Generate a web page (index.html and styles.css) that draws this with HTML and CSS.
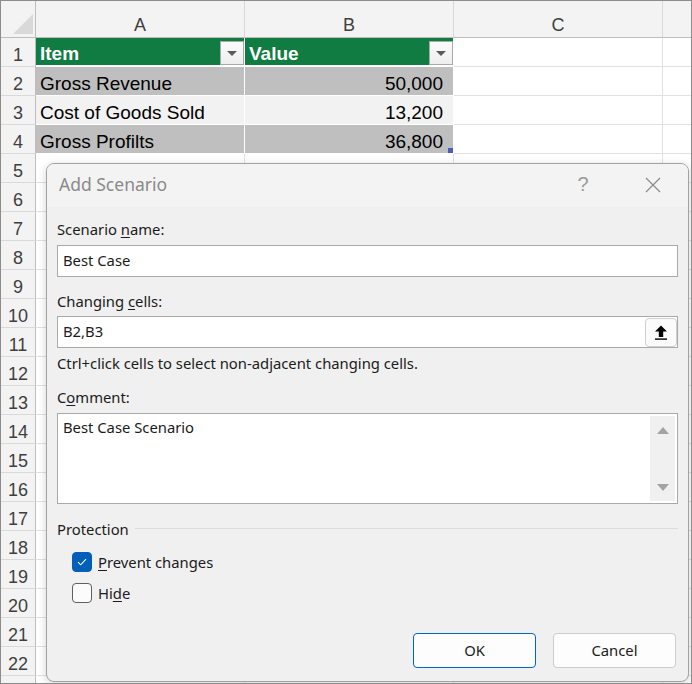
FILE: index.html
```html
<!DOCTYPE html>
<html lang="en">
<head>
<meta charset="utf-8">
<title>Add Scenario</title>
<link rel="stylesheet" href="styles.css">
</head>
<body>
<div class="app">
  <div class="sheet">
    <div class="corner"><span class="corner-tri"></span></div>
    <div class="colhead">A</div>
    <div class="colhead">B</div>
    <div class="colhead">C</div>
    <div class="colhead last"></div>

    <div class="rowhead">1</div>
    <div class="cell th"><span class="txt">Item</span><span class="filter"><span class="caret"></span></span></div>
    <div class="cell th"><span class="txt">Value</span><span class="filter"><span class="caret"></span></span></div>
    <div class="cell"></div><div class="cell last"></div>

    <div class="rowhead">2</div>
    <div class="cell band dark"><span class="txt">Gross Revenue</span></div>
    <div class="cell band dark num"><span class="txt">50,000</span></div>
    <div class="cell"></div><div class="cell last"></div>

    <div class="rowhead">3</div>
    <div class="cell band light"><span class="txt">Cost of Goods Sold</span></div>
    <div class="cell band light num"><span class="txt">13,200</span></div>
    <div class="cell"></div><div class="cell last"></div>

    <div class="rowhead">4</div>
    <div class="cell band dark"><span class="txt">Gross Profilts</span></div>
    <div class="cell band dark num sel"><span class="txt">36,800</span><span class="handle"></span></div>
    <div class="cell"></div><div class="cell last"></div>

    <div class="rowhead">5</div><div class="cell"></div><div class="cell"></div><div class="cell"></div><div class="cell last"></div>
    <div class="rowhead">6</div><div class="cell"></div><div class="cell"></div><div class="cell"></div><div class="cell last"></div>
    <div class="rowhead">7</div><div class="cell"></div><div class="cell"></div><div class="cell"></div><div class="cell last"></div>
    <div class="rowhead">8</div><div class="cell"></div><div class="cell"></div><div class="cell"></div><div class="cell last"></div>
    <div class="rowhead">9</div><div class="cell"></div><div class="cell"></div><div class="cell"></div><div class="cell last"></div>
    <div class="rowhead">10</div><div class="cell"></div><div class="cell"></div><div class="cell"></div><div class="cell last"></div>
    <div class="rowhead">11</div><div class="cell"></div><div class="cell"></div><div class="cell"></div><div class="cell last"></div>
    <div class="rowhead">12</div><div class="cell"></div><div class="cell"></div><div class="cell"></div><div class="cell last"></div>
    <div class="rowhead">13</div><div class="cell"></div><div class="cell"></div><div class="cell"></div><div class="cell last"></div>
    <div class="rowhead">14</div><div class="cell"></div><div class="cell"></div><div class="cell"></div><div class="cell last"></div>
    <div class="rowhead">15</div><div class="cell"></div><div class="cell"></div><div class="cell"></div><div class="cell last"></div>
    <div class="rowhead">16</div><div class="cell"></div><div class="cell"></div><div class="cell"></div><div class="cell last"></div>
    <div class="rowhead">17</div><div class="cell"></div><div class="cell"></div><div class="cell"></div><div class="cell last"></div>
    <div class="rowhead">18</div><div class="cell"></div><div class="cell"></div><div class="cell"></div><div class="cell last"></div>
    <div class="rowhead">19</div><div class="cell"></div><div class="cell"></div><div class="cell"></div><div class="cell last"></div>
    <div class="rowhead">20</div><div class="cell"></div><div class="cell"></div><div class="cell"></div><div class="cell last"></div>
    <div class="rowhead">21</div><div class="cell"></div><div class="cell"></div><div class="cell"></div><div class="cell last"></div>
    <div class="rowhead">22</div><div class="cell"></div><div class="cell"></div><div class="cell"></div><div class="cell last"></div>
    <div class="rowhead"></div><div class="cell"></div><div class="cell"></div><div class="cell"></div><div class="cell last"></div>
  </div>

  <div class="dialog">
    <div class="titlebar">
      <span class="title">Add Scenario</span>
      <span class="tb-btn help">?</span>
      <span class="tb-btn close">
        <svg width="16" height="16" viewBox="0 0 16 16"><path d="M1 1 L15 15 M15 1 L1 15" stroke="#8a8a8a" stroke-width="1.2" fill="none"/></svg>
      </span>
    </div>
    <div class="body">
      <div class="label l-first">Scenario <u>n</u>ame:</div>
      <div class="input">Best Case</div>

      <div class="label l-mid">Changing <u>c</u>ells:</div>
      <div class="input with-btn">
        <span class="val">B2,B3</span>
        <span class="ref-btn">
          <svg width="14" height="15" viewBox="0 0 14 15"><polygon points="7,0.5 1,6.5 4.8,6.5 4.8,12 9.2,12 9.2,6.5 13,6.5" fill="#000"/><rect x="1" y="13.4" width="12" height="1.4" fill="#000"/></svg>
        </span>
      </div>
      <div class="hint">Ctrl+click cells to select non-adjacent changing cells.</div>

      <div class="label l-comment">C<u>o</u>mment:</div>
      <div class="textarea">
        <div class="ta-text">Best Case Scenario</div>
        <div class="scrollbar">
          <span class="arr up"></span>
          <span class="arr down"></span>
        </div>
      </div>

      <div class="group">
        <span class="group-label">Protection</span>
        <span class="group-line"></span>
      </div>

      <div class="check first">
        <span class="box checked">
          <svg width="10" height="8" viewBox="0 0 10 8"><path d="M1 4.2 L3.7 6.8 L9 1.2" stroke="#fff" stroke-width="1.1" fill="none"/></svg>
        </span>
        <span class="check-label"><u>P</u>revent changes</span>
      </div>
      <div class="check second">
        <span class="box"></span>
        <span class="check-label">Hi<u>d</u>e</span>
      </div>

      <div class="buttons">
        <span class="btn default">OK</span>
        <span class="btn">Cancel</span>
      </div>
    </div>
  </div>
</div>
</body>
</html>
```

FILE: styles.css
```css
* { box-sizing: border-box; }

html, body {
  margin: 0;
  padding: 0;
  background: #ffffff;
}

.app {
  position: relative;
  width: 692px;
  height: 684px;
  border: 1px solid #8c8c8c;
  overflow: hidden;
  background: #ffffff;
}

/* ---------- Spreadsheet ---------- */
.sheet {
  display: grid;
  grid-template-columns: 35px 209px 209px 209px 1fr;
  grid-template-rows: 37px repeat(23, 29px);
  font-family: "Liberation Sans", Arial, sans-serif;
  font-size: 19px;
  line-height: 20px;
  color: #000;
}

.corner {
  background: #f3f3f3;
  border-right: 1px solid #bdbdbd;
  border-bottom: 1px solid #bdbdbd;
  display: flex;
  align-items: flex-end;
  justify-content: flex-end;
  padding: 0 2px 3px 0;
}

.corner-tri {
  width: 20px;
  height: 20px;
  background: #d9d9d9;
  clip-path: polygon(100% 0, 100% 100%, 0 100%);
}

.colhead {
  background: #f3f3f3;
  border-right: 1px solid #d8d8d8;
  border-bottom: 1px solid #bdbdbd;
  display: flex;
  align-items: flex-end;
  justify-content: center;
  padding-bottom: 2px;
  color: #3f3f3f;
  font-size: 18px;
}

.colhead.last, .cell.last { border-right: none; }

.rowhead {
  background: #f3f3f3;
  border-right: 1px solid #bdbdbd;
  border-bottom: 1px solid #dadada;
  display: flex;
  align-items: flex-end;
  justify-content: center;
  padding-bottom: 1px;
  color: #3f3f3f;
  font-size: 18px;
}

.cell {
  position: relative;
  background: #ffffff;
  border-right: 1px solid #e1e1e1;
  border-bottom: 1px solid #e1e1e1;
  display: flex;
  align-items: flex-end;
  padding: 0 0 1px 4px;
  white-space: nowrap;
}

.th {
  background: #107c41;
  color: #ffffff;
  font-weight: bold;
  border-right: 1px solid #ffffff;
  border-bottom: 2px solid #ffffff;
  padding: 0;
}

.th .txt { padding: 0 0 0 4px; margin-bottom: 1px; }

.filter {
  margin-left: auto;
  width: 24px;
  height: 24px;
  background: linear-gradient(#fbfbfb, #eeeeee);
  border: 1px solid #a9a9a9;
  display: flex;
  align-items: center;
  justify-content: center;
}

.caret {
  width: 0;
  height: 0;
  border-left: 5px solid transparent;
  border-right: 5px solid transparent;
  border-top: 5px solid #5a5a5a;
}

.band { border-right: 1px solid #ffffff; border-bottom: 1px solid #ffffff; }
.band.dark { background: #bfbfbf; }
.band.light { background: #f2f2f2; }
.num { justify-content: flex-end; padding-right: 10px; }

.handle {
  position: absolute;
  right: 0;
  bottom: 0;
  width: 5px;
  height: 5px;
  background: #4a5cc0;
}

/* ---------- Dialog ---------- */
.dialog {
  position: absolute;
  left: 45px;
  top: 162px;
  width: 643px;
  height: 519px;
  background: #f0f0f0;
  border: 1px solid #a3a3a3;
  border-radius: 8px;
  box-shadow: 0 2px 8px rgba(0, 0, 0, 0.18);
  overflow: hidden;
  display: flex;
  flex-direction: column;
  font-family: "Noto Sans", "Open Sans", sans-serif;
  font-size: 14.8px;
  color: #1b1b1b;
}

.titlebar {
  height: 43px;
  background: #f3f3f3;
  display: flex;
  align-items: center;
  padding: 0 12px 2px 12px;
  flex: none;
}

.title {
  font-size: 17.5px;
  color: #8a8a8a;
  margin-bottom: 1px;
}

.tb-btn {
  width: 46px;
  height: 30px;
  display: flex;
  align-items: center;
  justify-content: center;
}

.help {
  margin-left: auto;
  font-family: "Liberation Sans", Arial, sans-serif;
  font-size: 20px;
  color: #9a9a9a;
}

.close { margin-left: 24px; }

.body {
  flex: 1;
  display: flex;
  flex-direction: column;
  padding: 12px 10px 13px 10px;
}

.label { line-height: 20px; height: 20px; }
.l-first { margin-bottom: 6px; }
.l-mid { margin-top: 14px; margin-bottom: 5px; }
.l-comment { margin-top: 14px; margin-bottom: 6px; }

u { text-decoration-thickness: 1px; text-underline-offset: 2px; }

.input {
  height: 32px;
  background: #ffffff;
  border: 1px solid #a9a9a9;
  display: flex;
  align-items: center;
  padding: 0 0 3px 5px;
  line-height: 20px;
}

.with-btn { padding-right: 0; padding-bottom: 0; }
.with-btn .val { flex: 1; padding-bottom: 3px; }

.ref-btn {
  width: 32px;
  height: 29px;
  margin-right: 0;
  border: 1px solid #cfcfcf;
  border-radius: 4px;
  background: #fbfbfb;
  display: flex;
  align-items: center;
  justify-content: center;
}

.hint { margin-top: 5px; line-height: 20px; }

.textarea {
  height: 91px;
  background: #ffffff;
  border: 1px solid #a9a9a9;
  display: flex;
}

.ta-text {
  flex: 1;
  padding: 3px 5px;
  line-height: 20px;
}

.scrollbar {
  width: 25px;
  margin: 2px 2px 2px 0;
  background: #f0f0f0;
  display: flex;
  flex-direction: column;
  justify-content: space-between;
  align-items: center;
  padding: 11px 0 10px;
}

.arr { width: 0; height: 0; border-left: 6px solid transparent; border-right: 6px solid transparent; }
.arr.up { border-bottom: 7px solid #a3a3a3; }
.arr.down { border-top: 7px solid #a3a3a3; }

.group {
  margin-top: 15px;
  display: flex;
  align-items: center;
  height: 20px;
  line-height: 20px;
}

.group-line {
  flex: 1;
  height: 1px;
  background: #dcdcdc;
  margin-left: 6px;
  margin-top: -1px;
}

.check {
  display: flex;
  align-items: center;
  margin-left: 15px;
  height: 20px;
  line-height: 20px;
}
.check.first { margin-top: 13px; }
.check.second { margin-top: 11px; }

.box {
  width: 20px;
  height: 20px;
  border-radius: 4px;
  border: 1px solid #5f5f5f;
  background: #fbfbfb;
  margin-right: 6px;
  display: flex;
  align-items: center;
  justify-content: center;
}
.box.checked {
  background: #005fb8;
  border-color: #005fb8;
}

.buttons {
  margin-top: auto;
  display: flex;
  justify-content: flex-end;
  gap: 17px;
  padding-right: 2px;
}

.btn {
  width: 123px;
  height: 35px;
  border: 1px solid #cccccc;
  border-radius: 4px;
  background: #fdfdfd;
  display: flex;
  align-items: center;
  justify-content: center;
  padding-bottom: 1px;
}
.btn.default { border-color: #0067c0; }
```
